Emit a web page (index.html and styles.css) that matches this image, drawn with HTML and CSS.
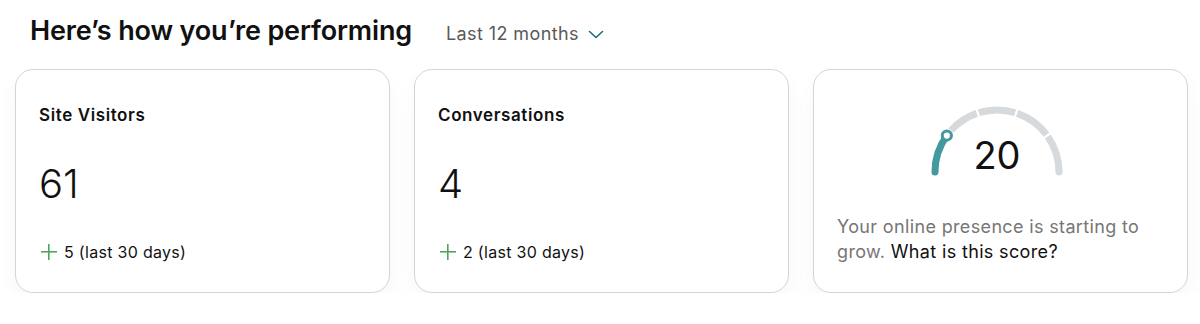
FILE: index.html
```html
<!DOCTYPE html>
<html>
  <head>
    <meta charset="UTF-8">
    <meta name="viewport" content="width=device-width,initial-scale=1">
    <title>Performance</title>
    <link rel="stylesheet" href="styles.css">
  </head>
  <body>
    <header class="perf-head">
      <h1>Here’s how you’re performing</h1>
      <button class="range-select">
        Last 12 months
        <svg class="chevron" width="16" height="9" viewBox="0 0 16 9"><path d="M1.5 1.5 L8 7.5 L14.5 1.5" fill="none" stroke="#1c6c78" stroke-width="1.6" stroke-linecap="round" stroke-linejoin="round"/></svg>
      </button>
    </header>
    <section class="cards">
      <div class="card">
        <h2>Site Visitors</h2>
        <div class="big-num">61</div>
        <div class="delta"><span class="plus"></span>5 (last 30 days)</div>
      </div>
      <div class="card">
        <h2>Conversations</h2>
        <div class="big-num">4</div>
        <div class="delta"><span class="plus"></span>2 (last 30 days)</div>
      </div>
      <div class="card score-card">
        <div class="gauge">
          <svg width="140" height="76" viewBox="0 0 140 76">
            <g fill="none" stroke="#d6dadd" stroke-width="7">
              <path d="M23.93 28.51 A62 62 0 0 1 49.82 11.38"/>
              <path d="M51.87 10.71 A62 62 0 0 1 88.13 10.71"/>
              <path d="M90.18 11.38 A62 62 0 0 1 119.51 32.69"/>
              <path d="M120.79 34.44 A62 62 0 0 1 132 70"/>
            </g>
            <circle cx="132" cy="70" r="3.5" fill="#d6dadd"/>
            <path d="M8 70 A62 62 0 0 1 19.84 33.56" fill="none" stroke="#42999e" stroke-width="7" stroke-linecap="round"/>
            <circle cx="19.84" cy="33.56" r="4.6" fill="#fff" stroke="#42999e" stroke-width="3"/>
          </svg>
          <span class="score">20</span>
        </div>
        <p class="score-text"><span class="muted">Your online presence is starting to grow.</span> <a href="#">What is this score?</a></p>
      </div>
    </section>
  </body>
</html>
```

FILE: styles.css
```css
body {
  margin: 0;
  background-color: #fff;
  font-family: 'Inter', 'Open Sans', sans-serif;
  color: #111;
}
.perf-head {
  display: flex;
  align-items: baseline;
  padding: 14px 0 0 30px;
  height: 55px;
  box-sizing: border-box;
}
.perf-head h1 {
  margin: 0;
  font-size: 27px;
  font-weight: 600;
  letter-spacing: -0.15px;
  color: #111;
}
.range-select {
  margin-left: 34px;
  padding: 0;
  border: none;
  background: none;
  font-family: inherit;
  font-size: 18px;
  letter-spacing: 0.4px;
  color: #5a5a5a;
  display: flex;
  align-items: center;
  gap: 9px;
}
.chevron {
  position: relative;
  top: 1px;
}
.cards {
  display: grid;
  grid-template-columns: repeat(3, 375px);
  gap: 24px;
  padding: 14px 0 0 15px;
}
.card {
  height: 224px;
  box-sizing: border-box;
  border: 1px solid #d4d4d4;
  border-radius: 18px;
  padding: 33px 23px 0 23px;
  box-shadow: 0 10px 22px rgba(0, 0, 0, 0.035);
  background: #fff;
}
.card h2 {
  margin: 0;
  font-size: 17px;
  font-weight: 600;
  letter-spacing: 0.6px;
  line-height: 24px;
}
.big-num {
  margin-top: 33px;
  font-size: 40px;
  font-weight: 300;
  line-height: 48px;
}
.delta {
  margin-top: 33px;
  display: flex;
  align-items: center;
  font-size: 16px;
  letter-spacing: 0.3px;
  line-height: 22px;
}
.plus {
  width: 16px;
  height: 16px;
  margin: 0 7px 0 2px;
  background:
    linear-gradient(#4fa55c, #4fa55c) center / 16px 1.6px no-repeat,
    linear-gradient(#4fa55c, #4fa55c) center / 1.6px 16px no-repeat;
}
.score-card {
  padding-top: 32px;
  display: flex;
  flex-direction: column;
  align-items: center;
}
.gauge {
  position: relative;
  width: 140px;
  height: 76px;
  margin-left: -7px;
}
.gauge svg {
  display: block;
}
.score {
  position: absolute;
  left: 0;
  right: 0;
  top: 30px;
  text-align: center;
  font-size: 38px;
  font-weight: 400;
  line-height: 46px;
  color: #111;
}
.score-text {
  align-self: stretch;
  margin: 36px 0 0 0;
  font-size: 18px;
  letter-spacing: 0.35px;
  line-height: 25px;
  color: #111;
}
.score-text .muted {
  color: #767676;
}
.score-text a {
  color: #111;
  text-decoration: none;
}
```
